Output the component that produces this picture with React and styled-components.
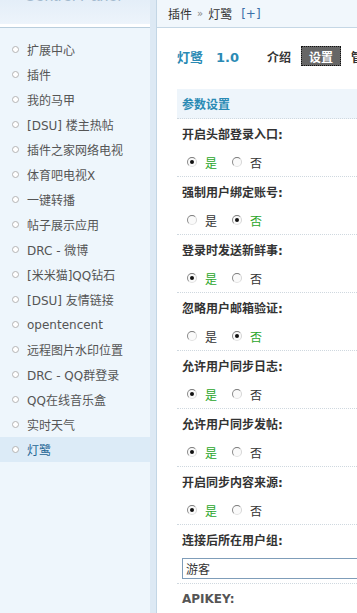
import React from 'react';
import styled, { createGlobalStyle } from 'styled-components';

const GlobalStyle = createGlobalStyle`
  html, body {
    margin: 0;
    padding: 0;
    background: #ffffff;
  }
  body {
    width: 357px;
    height: 613px;
    overflow: hidden;
    font-family: "DejaVu Sans", "Noto Sans CJK SC", sans-serif;
    font-size: 12px;
    color: #333;
  }
`;

const menuItems = [
  '扩展中心',
  '插件',
  '我的马甲',
  '[DSU] 楼主热帖',
  '插件之家网络电视',
  '体育吧电视X',
  '一键转播',
  '帖子展示应用',
  'DRC - 微博',
  '[米米猫]QQ钻石',
  '[DSU] 友情链接',
  'opentencent',
  '远程图片水印位置',
  'DRC - QQ群登录',
  'QQ在线音乐盒',
  '实时天气',
  '灯鹭',
];

const radioSettings = [
  { label: '开启头部登录入口:', value: true },
  { label: '强制用户绑定账号:', value: false },
  { label: '登录时发送新鲜事:', value: true },
  { label: '忽略用户邮箱验证:', value: false },
  { label: '允许用户同步日志:', value: true },
  { label: '允许用户同步发帖:', value: true },
  { label: '开启同步内容来源:', value: true },
];

const Page = styled.div`
  display: flex;
  height: 613px;
  overflow: hidden;
`;

const Sidebar = styled.aside`
  width: 150px;
  flex-shrink: 0;
  display: flex;
  flex-direction: column;
  background: #eef6fc;
  border-right: 6px solid #dde9f4;
  box-shadow: 1px 0 0 #c3d6e5;
  margin-right: 1px;
`;

const SideHeader = styled.div`
  height: 24px;
  overflow: hidden;
  background: linear-gradient(#e4eef8, #edf4fb);
  border-bottom: 3px solid #ffffff;
  box-shadow: 0 1px 0 #b9cedd;
`;

const Brand = styled.div`
  margin-top: -13px;
  padding-left: 24px;
  font-family: "Liberation Sans", sans-serif;
  font-size: 16px;
  line-height: 18px;
  color: #a3bace;
`;

const Menu = styled.ul`
  list-style: none;
  margin: 0;
  padding: 10px 0 0;
`;

const MenuItem = styled.li`
  display: flex;
  align-items: center;
  height: 25px;
  padding-left: 12px;
  background: ${p => (p.active ? '#dcebf7' : 'transparent')};
  color: ${p => (p.active ? '#1f6594' : '#555')};
  font-size: 12px;
  white-space: nowrap;
`;

const Bullet = styled.span`
  width: 5px;
  height: 5px;
  border: 1px solid #b4b4b4;
  border-radius: 50%;
  background: #ffffff;
  margin-right: 8px;
  flex-shrink: 0;
`;

const Main = styled.main`
  flex: 1;
  min-width: 0;
  display: flex;
  flex-direction: column;
`;

const Crumbs = styled.div`
  height: 27px;
  display: flex;
  align-items: center;
  padding-left: 11px;
  background: #f1f7fc;
  border-bottom: 1px solid #c5d7e5;
  font-size: 12px;
  color: #333;
  white-space: nowrap;
`;

const CrumbSep = styled.span`
  margin: 0 5px;
  color: #888;
  font-size: 10px;
`;

const AddLink = styled.span`
  margin-left: 9px;
  color: #3b70a8;
`;

const Content = styled.div`
  padding: 18px 0 0 20px;
`;

const TitleRow = styled.div`
  display: flex;
  align-items: center;
  height: 20px;
  white-space: nowrap;
`;

const Title = styled.h1`
  margin: 0 20px 0 0;
  font-size: 13px;
  font-weight: bold;
  color: #2a8ab4;
`;

const Version = styled.span`
  margin-left: 13px;
`;

const Tab = styled.span`
  display: flex;
  align-items: center;
  height: 18px;
  padding: 0 7px;
  margin-right: 2px;
  font-weight: bold;
  font-size: 12px;
  color: ${p => (p.active ? '#ffffff' : '#333')};
  background: ${p => (p.active ? '#666666' : 'transparent')};
  border: 1px ${p => (p.active ? 'dotted #111' : 'solid transparent')};
`;

const Panel = styled.section`
  margin-top: 23px;
`;

const PanelHead = styled.div`
  height: 29px;
  display: flex;
  align-items: center;
  padding-left: 5px;
  background: #eef5fb;
  border-bottom: 1px dotted #cfd8df;
  color: #2a8ab4;
  font-weight: bold;
  font-size: 12px;
`;

const Setting = styled.div`
  padding-left: 5px;
  border-bottom: 1px dotted #cfd8df;
`;

const Label = styled.div`
  height: 29px;
  display: flex;
  align-items: center;
  font-weight: bold;
  font-size: 12px;
  color: ${p => (p.muted ? '#555' : '#333')};
  white-space: nowrap;
`;

const Choices = styled.div`
  height: 28px;
  display: flex;
  align-items: center;
  padding-left: 5px;
`;

const Radio = styled.span`
  position: relative;
  width: 8px;
  height: 8px;
  border-radius: 50%;
  border: 1px solid;
  border-color: #7b7b7b #d6d6d6 #e2e2e2 #8a8a8a;
  background: #fafafa;
  margin-right: 8px;

  &::after {
    content: '';
    display: ${p => (p.checked ? 'block' : 'none')};
    position: absolute;
    left: 2px;
    top: 2px;
    width: 4px;
    height: 4px;
    border-radius: 50%;
    background: #111;
  }
`;

const Choice = styled.span`
  color: ${p => (p.checked ? '#2aa52a' : '#333')};
  font-size: 12px;
  margin-right: 15px;
`;

const SelectRow = styled.div`
  height: 28px;
  display: flex;
  align-items: center;
`;

const Select = styled.div`
  flex: 1;
  height: 19px;
  margin-right: -20px;
  display: flex;
  align-items: center;
  padding-left: 3px;
  border: 1px solid #7f9db9;
  background: #ffffff;
  font-size: 12px;
  color: #333;
`;

const SelectSetting = styled(Setting)`
  padding-bottom: 1px;
`;

const LastSetting = styled.div`
  padding-left: 5px;
`;

const App = () => (
  <>
    <GlobalStyle />
    <Page>
      <Sidebar>
        <SideHeader>
          <Brand>Control Panel</Brand>
        </SideHeader>
        <Menu>
          {menuItems.map((item, i) => (
            <MenuItem key={item} active={i === menuItems.length - 1}>
              <Bullet />
              {item}
            </MenuItem>
          ))}
        </Menu>
      </Sidebar>
      <Main>
        <Crumbs>
          插件
          <CrumbSep>»</CrumbSep>
          灯鹭
          <AddLink>[+]</AddLink>
        </Crumbs>
        <Content>
          <TitleRow>
            <Title>
              灯鹭
              <Version>1.0</Version>
            </Title>
            <Tab>介绍</Tab>
            <Tab active>设置</Tab>
            <Tab>管理</Tab>
          </TitleRow>
          <Panel>
            <PanelHead>参数设置</PanelHead>
            {radioSettings.map(s => (
              <Setting key={s.label}>
                <Label>{s.label}</Label>
                <Choices>
                  <Radio checked={s.value} />
                  <Choice checked={s.value}>是</Choice>
                  <Radio checked={!s.value} />
                  <Choice checked={!s.value}>否</Choice>
                </Choices>
              </Setting>
            ))}
            <SelectSetting>
              <Label>连接后所在用户组:</Label>
              <SelectRow>
                <Select>游客</Select>
              </SelectRow>
            </SelectSetting>
            <LastSetting>
              <Label muted>APIKEY:</Label>
            </LastSetting>
          </Panel>
        </Content>
      </Main>
    </Page>
  </>
);

export default App;
